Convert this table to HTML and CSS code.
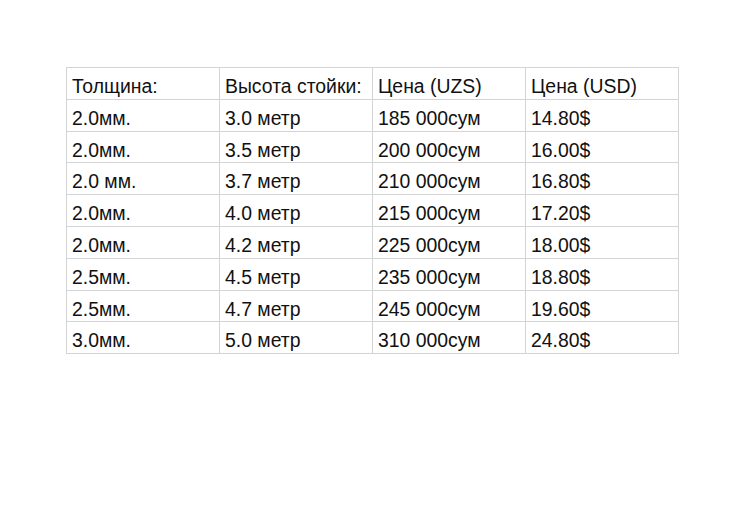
FILE: index.html
```html
<!DOCTYPE html>
<html>
<head>
<meta charset="utf-8">
<link rel="stylesheet" href="styles.css">
</head>
<body>
<div class="page">
<table class="price">
<tr><td>Толщина:</td><td>Высота стойки:</td><td>Цена (UZS)</td><td>Цена (USD)</td></tr>
<tr><td>2.0мм.</td><td>3.0 метр</td><td>185 000сум</td><td>14.80$</td></tr>
<tr><td>2.0мм.</td><td>3.5 метр</td><td>200 000сум</td><td>16.00$</td></tr>
<tr><td>2.0 мм.</td><td>3.7 метр</td><td>210 000сум</td><td>16.80$</td></tr>
<tr><td>2.0мм.</td><td>4.0 метр</td><td>215 000сум</td><td>17.20$</td></tr>
<tr><td>2.0мм.</td><td>4.2 метр</td><td>225 000сум</td><td>18.00$</td></tr>
<tr><td>2.5мм.</td><td>4.5 метр</td><td>235 000сум</td><td>18.80$</td></tr>
<tr><td>2.5мм.</td><td>4.7 метр</td><td>245 000сум</td><td>19.60$</td></tr>
<tr><td>3.0мм.</td><td>5.0 метр</td><td>310 000сум</td><td>24.80$</td></tr>
</table>
</div>
</body>
</html>
```
FILE: styles.css
```css
html, body {
  margin: 0;
  padding: 0;
  background: #ffffff;
}
.page {
  padding: 67px 0 0 66px;
  font-family: "Liberation Sans", Arial, sans-serif;
  color: #111111;
}
.price {
  border-collapse: collapse;
  table-layout: fixed;
  width: 613px;
}
.price td {
  width: 153px;
  height: 31.8px;
  box-sizing: border-box;
  border: 1px solid #d4d4d4;
  padding: 7px 0 0 5px;
  vertical-align: top;
  font-size: 19.4px;
  line-height: 22px;
  white-space: nowrap;
  overflow: hidden;
}
```
